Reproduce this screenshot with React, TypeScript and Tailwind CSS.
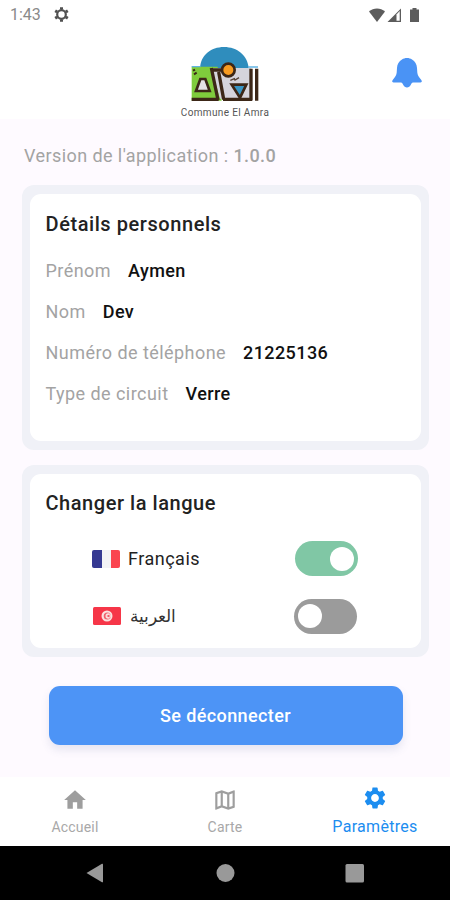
import React from "react";
import { MdHome, MdOutlineMap, MdSettings } from "react-icons/md";

type RowProps = {
  label: string;
  value: string;
};

const details: RowProps[] = [
  { label: "Prénom", value: "Aymen" },
  { label: "Nom", value: "Dev" },
  { label: "Numéro de téléphone", value: "21225136" },
  { label: "Type de circuit", value: "Verre" },
];

const StatusBar = () => (
  <div className="flex h-[30px] items-center justify-between pl-[10px] pr-[30px]">
    <div className="flex items-center">
      <span className="w-[43px] text-[16px] leading-[30px] text-[#8a8a8a]">1:43</span>
      <svg width="17" height="17" viewBox="0 0 17 17" className="-mt-[1px]">
        <circle cx="8.500" cy="8.500" r="4.300" fill="none" stroke="#505050" strokeWidth="2.200" />
        <path
          d="M8.500 3.500V1.200M8.500 15.800v-2.300M4.200 6 2.200 4.800M14.800 12.200l-2-1.200M4.200 11l-2 1.200M14.800 4.800l-2 1.200"
          stroke="#505050"
          strokeWidth="3"
        />
      </svg>
    </div>
    <svg width="51" height="16" viewBox="0 0 51 16" className="-mt-[1px]">
      <path d="M8 15 0 4.600C4.500.300 11.500.300 16 4.600Z" fill="#5c5c5c" />
      <path d="M18.500 15h13.500V1.500Z" fill="#5c5c5c" />
      <path d="M27.500 7.500v6.200h3.200V4Z" fill="#fff" />
      <path d="M43.500 1h4v1.500H50V15h-9V2.500h2.500Z" fill="#5c5c5c" />
    </svg>
  </div>
);

const Logo = () => (
  <svg width="68" height="56" viewBox="51 21 204 168">
    <path d="M78 84C80 46 110 21 150 21s70 25 74 63Z" fill="#2f8dbd" />
    <path d="M53 80h78l12 102H53Z" fill="#7fcb3c" />
    <path d="M112 84h120v92H138Z" fill="#d5d4dc" />
    <path d="M53 80h26M222 81h30" stroke="#62b4e4" strokeWidth="4" />
    <path d="M57 92l6-3M60 103l8-5" stroke="#3c2717" strokeWidth="6" />
    <path d="M53 178h81M112 84l20 96M110 90h40M134 96l15 82M147 178h88M231 86v94M248 86v96" fill="none" stroke="#3c2717" strokeWidth="10" />
    <path d="M239 88v94" stroke="#fff" strokeWidth="4" />
    <path d="M79 117h15l13 36H66Z" fill="#e6e2e6" stroke="#3c2717" strokeWidth="8" />
    <path d="M173 134h44l-19 39Z" fill="#3895c4" stroke="#3c2717" strokeWidth="8" />
    <path d="M169 121l12-5 2 4 12-7" fill="none" stroke="#554236" strokeWidth="4" />
    <circle cx="163" cy="90" r="19" fill="#f89c22" stroke="#3c2717" strokeWidth="8" />
  </svg>
);

const Header = () => (
  <div className="grid h-[89px] grid-cols-[1fr_100px_1fr] items-start">
    <div />
    <div className="flex flex-col items-center pt-[17px]">
      <Logo />
      <span className="mt-[3px] whitespace-nowrap text-[10px] leading-[14px] tracking-[0.35px] text-[#555]">
        Commune El Amra
      </span>
    </div>
    <div className="flex justify-end pr-[28px] pt-[27px]">
      <svg width="30" height="32" viewBox="0 0 30 32" fill="#4a93f5">
        <path d="M15 1c2 0 3.500.500 5 1.500 3 1.700 4.800 4.600 5 8.500l.3 4.500c.2 2.500 1.300 4.200 4 7.500.9 1.200.6 2.500-.8 2.500h-7.500c-1.200.2-1.600 1-2.200 2.200-.9 1.800-2.200 2.700-3.800 2.700s-2.900-.9-3.800-2.700c-.6-1.200-1-2-2.200-2.200H1.500C.1 25.500-.2 24.200.7 23c2.700-3.300 3.800-5 4-7.500L5 11c.2-3.900 2-6.800 5-8.500C11.500 1.500 13 1 15 1Z" />
      </svg>
    </div>
  </div>
);

const DetailRow = ({ label, value }: RowProps) => (
  <div className="flex h-[41.2px] items-center gap-[17px] text-[18px]">
    <span className="tracking-[0.45px] text-[#a3a3a3]">{label}</span>
    <span className="font-medium tracking-[0.4px] text-[#111]">{value}</span>
  </div>
);

const FlagFr = () => (
  <svg width="28" height="20" viewBox="0 0 28 20">
    <path d="M2 1h8v18H2Q0 19 0 17V3Q0 1 2 1Z" fill="#353992" />
    <path d="M10 1h9v18h-9Z" fill="#f2f2f5" />
    <path d="M19 1h7q2 0 2 2v14q0 2-2 2h-7Z" fill="#fa4450" />
  </svg>
);

const FlagTn = () => (
  <svg width="28" height="20" viewBox="0 0 28 20">
    <rect y="1" width="28" height="18" rx="1.500" fill="#f63648" />
    <circle cx="14" cy="10" r="5.500" fill="#fbe1df" />
    <circle cx="14.300" cy="10" r="3.600" fill="#f0606c" />
    <circle cx="15.200" cy="10" r="2.700" fill="#fbe1df" />
    <path d="M13.500 10l3-1.500v3Z" fill="#f0505e" />
  </svg>
);

const Toggle = ({ on }: { on: boolean }) => (
  <div
    className={
      on
        ? "flex h-[35px] w-[63px] items-center justify-end rounded-full bg-[#80c7a5] px-[4px]"
        : "-ml-[1px] flex h-[35px] w-[63px] items-center rounded-full bg-[#9b9b9b] px-[4px]"
    }
  >
    <div className="h-6 w-6 rounded-full bg-white" />
  </div>
);

const NavItem = ({ icon, label }: { icon: React.ReactNode; label: string }) => (
  <div className="flex flex-1 flex-col items-center pt-[10px] text-[#9e9e9e]">
    {icon}
    <span className="mt-[6px] text-[14px] leading-[16px] tracking-[0.2px] text-[#a8a8a8]">{label}</span>
  </div>
);

const App = () => {
  return (
    <div className="flex h-[900px] w-[450px] flex-col overflow-hidden bg-[#fefaff] font-['Roboto','Noto_Sans',sans-serif]">
      <div className="bg-white">
        <StatusBar />
        <Header />
      </div>

      <div className="flex flex-1 flex-col pl-[22px] pr-[21px]">
        <p className="mt-[25px] pl-[2px] text-[18px] leading-6 tracking-[0.42px] text-[#a3a3a3]">
          Version de l'application : <span className="font-medium">1.0.0</span>
        </p>

        <div className="mt-[17px] h-[265px] rounded-xl bg-[#f0f1f7] px-2 py-[9px]">
          <div className="h-full rounded-[11px] bg-white pl-[15.5px] pt-[14px]">
            <h2 className="mb-[9.5px] text-[20px] font-medium leading-8 tracking-[0.57px] text-[#222]">
              Détails personnels
            </h2>
            {details.map((row) => (
              <DetailRow key={row.label} {...row} />
            ))}
          </div>
        </div>

        <div className="mt-[15px] h-[192px] rounded-xl bg-[#f0f1f7] px-2 py-[9px]">
          <div className="h-full rounded-[11px] bg-white pl-[15px] pt-[13px]">
            <h2 className="pl-[0.5px] text-[20px] font-medium leading-8 tracking-[0.55px] text-[#222]">
              Changer la langue
            </h2>
            <div className="mt-[11px] flex h-[57px] items-center pl-[47px]">
              <FlagFr />
              <span className="ml-2 w-[167px] text-[18px] tracking-[0.5px] text-[#222]">Français</span>
              <Toggle on />
            </div>
            <div className="flex h-[58px] items-center pl-[48px]">
              <FlagTn />
              <span className="ml-[9px] w-[165px] text-[17px] leading-none text-[#333]">
                <bdi>العربية</bdi>
              </span>
              <Toggle on={false} />
            </div>
          </div>
        </div>

        <button className="ml-[26.5px] mt-[29px] h-[59px] w-[354px] rounded-[11px] bg-[#4d94f6] text-[18px] font-medium tracking-[0.4px] text-white shadow-[0_5px_8px_rgba(80,90,150,0.13)]">
          Se déconnecter
        </button>
      </div>

      <div className="flex h-[69px] bg-white">
        <NavItem icon={<MdHome className="h-[26px] w-[26px]" />} label="Accueil" />
        <NavItem icon={<MdOutlineMap className="h-[26px] w-[26px]" />} label="Carte" />
        <div className="flex flex-1 flex-col items-center pt-[8px] text-[#1c8df0]">
          <MdSettings className="h-[26px] w-[26px]" />
          <span className="mt-[7px] text-[16px] leading-[18px] tracking-[0.3px]">Paramètres</span>
        </div>
      </div>

      <div className="flex h-[54px] items-center bg-black text-[#999]">
        <svg width="450" height="20" viewBox="0 0 450 20" fill="currentColor">
          <path d="M86.500 10 102 .8q1-.5 1 .7v17q0 1.200-1 .7Z" />
          <circle cx="225.500" cy="10" r="9" />
          <rect x="345.500" y="1" width="18.500" height="18.500" rx="1.500" />
        </svg>
      </div>
    </div>
  );
};

export default App;
